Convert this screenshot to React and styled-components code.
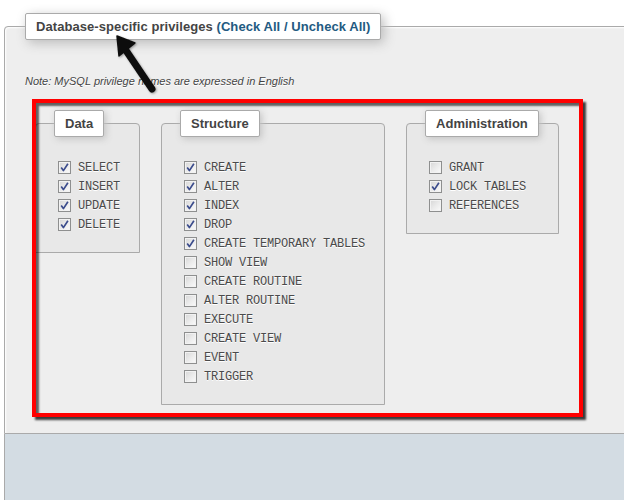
import React from 'react';
import styled, { createGlobalStyle } from 'styled-components';

const GlobalStyle = createGlobalStyle`
  html, body {
    margin: 0;
    padding: 0;
    background: #fff;
    overflow: hidden;
  }
  body {
    font-family: "Liberation Sans", Arial, sans-serif;
    color: #444;
  }
`;

const Page = styled.div`
  position: relative;
  width: 624px;
  height: 500px;
  overflow: hidden;
  padding: 13px 0 0 4px;
  box-sizing: border-box;
`;

const Panel = styled.fieldset`
  width: 660px;
  margin: 0;
  padding: 0 20px 28px 20px;
  border: 1px solid #aaa;
  border-radius: 4px 4px 0 0;
  background: #eee;
  box-shadow: 1px 1px 2px #fff inset;
  box-sizing: border-box;
`;

const Legend = styled.legend`
  margin: 0;
  padding: 6px 10px;
  border: 1px solid #aaa;
  border-radius: 2px;
  background: #fff;
  box-shadow: ${(p) => (p.$small ? '2px 2px 7px #c4c4c4' : '3px 3px 12px #bbb')};
  font-size: 13px;
  line-height: 13px;
  font-weight: bold;
  letter-spacing: ${(p) => (p.$small ? '0' : '0.07px')};
  color: #444;
  white-space: nowrap;
`;

const LinkText = styled.span`
  color: #235a81;
`;

const Note = styled.p`
  margin: 34px 0 0 0;
  font-size: 11px;
  line-height: 14px;
  font-style: italic;
  color: #444;
  text-shadow: 0 1px 0 #fff;
`;

const GroupRow = styled.div`
  display: flex;
  align-items: flex-start;
  gap: 21px;
  margin: 22px 0 0 10px;
`;

const Group = styled.fieldset`
  margin: 0;
  padding: 0 19px 18px 18px;
  border: 1px solid #aaa;
  border-radius: 4px 4px 0 0;
  background: #e8e8e8;
  box-sizing: border-box;
`;

const List = styled.div`
  display: flex;
  flex-direction: column;
  margin: 21px 0 0 4px;
`;

const Row = styled.label`
  display: flex;
  align-items: center;
  height: 19px;
  font-family: "Liberation Mono", "Courier New", monospace;
  font-size: 12px;
  letter-spacing: -0.2px;
  color: #4a4a4a;
  text-shadow: 0 1px 0 #fff;
  white-space: pre;
`;

const Box = styled.span`
  display: inline-flex;
  align-items: center;
  justify-content: center;
  width: 13px;
  height: 13px;
  margin-right: 7px;
  border: 1px solid #8e8f8f;
  box-sizing: border-box;
  background: linear-gradient(135deg, #d6d6d6 0%, #ececec 55%, #fbfbfb 100%);
  box-shadow: inset 0 0 0 1px #f2f2f2;
  flex: none;
`;

const Footer = styled.div`
  width: 660px;
  height: 80px;
  background: #d3dce3;
  border-left: 1px solid #aaa;
  box-sizing: border-box;
`;

const Highlight = styled.div`
  position: absolute;
  left: 32px;
  top: 99px;
  width: 551px;
  height: 318px;
  box-sizing: border-box;
  border: 4px solid #ff0000;
  box-shadow: 3px 3px 2px rgba(0, 0, 0, 0.75), inset 3px 3px 2px rgba(0, 0, 0, 0.6);
  pointer-events: none;
`;

const Arrow = styled.svg`
  position: absolute;
  left: 100px;
  top: 28px;
  width: 64px;
  height: 72px;
  overflow: visible;
`;

const groups = [
  {
    title: 'Data',
    items: [
      ['SELECT', true],
      ['INSERT', true],
      ['UPDATE', true],
      ['DELETE', true],
    ],
  },
  {
    title: 'Structure',
    items: [
      ['CREATE', true],
      ['ALTER', true],
      ['INDEX', true],
      ['DROP', true],
      ['CREATE TEMPORARY TABLES', true],
      ['SHOW VIEW', false],
      ['CREATE ROUTINE', false],
      ['ALTER ROUTINE', false],
      ['EXECUTE', false],
      ['CREATE VIEW', false],
      ['EVENT', false],
      ['TRIGGER', false],
    ],
  },
  {
    title: 'Administration',
    items: [
      ['GRANT', false],
      ['LOCK TABLES', true],
      ['REFERENCES', false],
    ],
  },
];

const Check = ({ checked }) => (
  <Box>
    {checked && (
      <svg width="9" height="9" viewBox="0 0 9 9">
        <path d="M1.2 4.6 L3.4 7.6 L7.9 0.8" fill="none" stroke="#3b4c8c" strokeWidth="1.7" strokeLinejoin="round" />
      </svg>
    )}
  </Box>
);

const App = () => (
  <Page>
    <GlobalStyle />
    <Panel>
      <Legend>
        Database-specific privileges <LinkText>(Check All / Uncheck All)</LinkText>
      </Legend>
      <Note>Note: MySQL privilege names are expressed in English</Note>
      <GroupRow>
        {groups.map((g) => (
          <Group key={g.title}>
            <Legend $small>{g.title}</Legend>
            <List>
              {g.items.map(([name, on]) => (
                <Row key={name}>
                  <Check checked={on} />
                  {name}
                </Row>
              ))}
            </List>
          </Group>
        ))}
      </GroupRow>
    </Panel>
    <Footer />

    <Highlight />
    <Arrow viewBox="100 28 64 72">
      <defs>
        <filter id="soft" x="-30%" y="-30%" width="160%" height="160%">
          <feDropShadow dx="1" dy="1" stdDeviation="1" floodColor="#000" floodOpacity="0.35" />
        </filter>
      </defs>
      <g filter="url(#soft)" fill="#111" stroke="#111">
        <line x1="152" y1="89" x2="125" y2="49" strokeWidth="7" strokeLinecap="round" />
        <polygon points="117,36 135,43 119,56" strokeWidth="1.5" strokeLinejoin="round" />
      </g>
    </Arrow>
  </Page>
);

export default App;
